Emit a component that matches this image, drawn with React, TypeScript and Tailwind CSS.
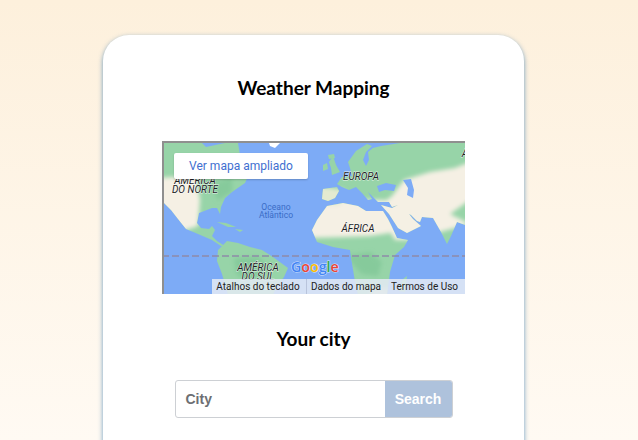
const GOOGLE_LETTERS = [
  { letter: "G", fill: "#4285f4" },
  { letter: "o", fill: "#ea4335" },
  { letter: "o", fill: "#fbbc05" },
  { letter: "g", fill: "#4285f4" },
  { letter: "l", fill: "#34a853" },
  { letter: "e", fill: "#ea4335" },
];

const WATER = "#7dabf6";
const GREEN = "#97d4a8";
const DEEP = "#86ca9b";
const SAND = "#f5f0e4";

const LAND = [
  // North America
  "M162 143H202L206 147L225 143L238 143L240 155L250 172L245 183L232 192L225 198L221 207L220 214L217 208L212 208L199 213L197 223L201 228L209 229L212 226L215 230L212 236L217 241L228 248L221 246L212 240L198 234L186 229L178 219L171 210L164 203L162 198Z",
  // Caribbean
  "M217 222L226 223L236 227L228 227Z",
  "M235 229L243 230L240 232Z",
  // South America
  "M218 250L227 241L238 243L250 247L262 250L273 257L288 268L284 277L276 288L273 295H228L222 274L217 261Z",
  // Iceland, Ireland, UK
  "M328 155L334 154L335 158L329 159Z",
  "M323 165L327 163L328 169L323 171Z",
  "M329 162L333 156L336 165L340 172L332 175L331 168Z",
  // Iberia
  "M323 189L337 187L339 191L335 198L328 201L322 199Z",
  // Eurasia
  "M337 184L342 177L352 176L350 168L348 162L356 151L367 144L372 146L366 152L363 160L366 166L369 160L368 152L373 148L381 146L400 143H465V225L457 222L451 236L447 244L441 232L433 218L422 217L420 222L417 221L411 215L407 213L409 214L398 205L392 207L389 202L378 202L374 198L368 192L372 199L368 200L362 193L356 187L349 190L342 187Z",
  // Africa
  "M312 230L317 220L327 206L343 203L358 206L366 211L383 211L388 219L392 227L397 238L408 240L404 247L395 255L390 272L387 295H358L355 282L352 263L350 250L333 247L317 242Z",
  "M405 292L407 276L402 280L399 291Z",
  // Arabia
  "M381 205L392 208L398 205L409 214L413 219L421 226L407 233L398 228L389 214Z",
];

// viewBox follows the page's pixel coordinates, the map sits at (162, 141)
function WorldMap() {
  return (
    <svg viewBox="162 141 303 153" className="block h-[153px] w-[303px]">
      <defs>
        <filter id="soft" x="-5%" y="-5%" width="110%" height="110%">
          <feGaussianBlur stdDeviation="0.4" />
        </filter>
        <filter id="softer" x="-20%" y="-20%" width="140%" height="140%">
          <feGaussianBlur stdDeviation="2" />
        </filter>
        <clipPath id="land">
          {LAND.map((d, i) => (
            <path key={i} d={d} />
          ))}
        </clipPath>
      </defs>
      <rect x="162" y="141" width="303" height="154" fill={WATER} />

      <g filter="url(#soft)">
        {LAND.map((d, i) => (
          <path key={i} d={d} fill={GREEN} />
        ))}
        <path d="M269 143H280L275 148L270 146Z" fill="#ffffff" />

        {/* Sand and forest tints, kept inside the coasts */}
        <g clipPath="url(#land)">
          <g filter="url(#softer)">
            <path d="M155 178L196 176L200 200L198 226L180 232L155 210Z" fill={SAND} />
            <path d="M305 200H385L396 232L370 236L345 237L305 238Z" fill={SAND} />
            <path d="M376 208L392 196L404 180L430 172L455 168L470 162V200L450 214L470 224L440 232L425 240L395 240Z" fill={SAND} />
            <path d="M318 186L345 190L340 205L316 205Z" fill="#e4ead0" />
            <path d="M345 256L370 252L382 262L378 276L362 274Z" fill={DEEP} />
            <path d="M234 258L258 256L270 268L250 282L236 274Z" fill={DEEP} />
            <path d="M210 184L232 178L232 192L218 200Z" fill={DEEP} />
            <path d="M370 288H390V298H370Z" fill="#cfe3c0" />
          </g>
        </g>

        {/* Inland seas */}
        <path d="M377 186L386 183L396 185L394 191L385 190L379 192Z" fill={WATER} />
        <path d="M403 180L411 179L414 190L413 198L407 195L408 188Z" fill={WATER} />
      </g>

      <line x1="162" y1="256" x2="465" y2="256" stroke="#8f8aa8" strokeWidth="1.4" strokeDasharray="7 3" />

      <g fontFamily="Roboto, sans-serif" fontStyle="italic" fontSize="10" fill="#202124" stroke="#ffffff" strokeWidth="0.8" strokeOpacity="0.8" paintOrder="stroke" textAnchor="middle">
        <text x="195" y="184">AMÉRICA</text>
        <text x="195" y="193">DO NORTE</text>
        <text x="361" y="180">EUROPA</text>
        <text x="358" y="232">ÁFRICA</text>
        <text x="258" y="271">AMÉRICA</text>
        <text x="258" y="280">DO SUL</text>
        <text x="465" y="157">Á</text>
      </g>
      <g fontFamily="Roboto, sans-serif" fontSize="8.6" fill="#3a6cc6" textAnchor="middle">
        <text x="276" y="210">Oceano</text>
        <text x="276" y="218">Atlântico</text>
      </g>
      <text x="291" y="272" fontFamily="'Open Sans', sans-serif" fontSize="14.2" fontWeight="600" stroke="#ffffff" strokeWidth="1" strokeOpacity="0.7" paintOrder="stroke">
        {GOOGLE_LETTERS.map((item, i) => (
          <tspan key={i} fill={item.fill}>
            {item.letter}
          </tspan>
        ))}
      </text>
    </svg>
  );
}

export default function App() {
  return (
    <div className="flex h-[440px] justify-center overflow-hidden bg-gradient-to-b from-[#fdf0dc] to-[#fffaf3] pt-[35px] pr-[11px]">
      <div className="flex h-[500px] w-[421px] flex-col items-center rounded-[26px] bg-white shadow-[0_2px_5px_rgba(70,130,180,0.8)]">
        <h1 className="mt-[40px] font-['Lato',sans-serif] text-[19px] leading-[26px] font-bold text-black">
          Weather Mapping
        </h1>

        <div className="relative mt-[40px] h-[154px] w-[303px] overflow-hidden">
          <WorldMap />
          <div className="absolute inset-x-0 top-0 h-[2px] bg-[#8f8f8f]" />
          <div className="absolute top-0 bottom-[1px] left-0 w-[2px] bg-[#8f8f8f]" />
          <div className="absolute top-[12px] left-[12px] flex h-[26px] w-[134px] items-center justify-center rounded-[2px] bg-white font-['Roboto',sans-serif] text-[12px] text-[#3f6fd0] shadow-[0_1px_2px_rgba(0,0,0,0.2)]">
            Ver mapa ampliado
          </div>
          <div className="absolute right-0 bottom-[1px] flex h-[15px] items-center bg-[#e4eaf5]/85 font-['Roboto',sans-serif] text-[10px] leading-none text-[#222222]">
            <span className="flex h-full w-[95px] items-center justify-center border-r border-[#b9c4dc] pr-[2px]">Atalhos do teclado</span>
            <span className="w-[80px] pr-[2px] text-center">Dados do mapa</span>
            <span className="w-[78px] pr-[3px] text-center">Termos de Uso</span>
          </div>
        </div>

        <h2 className="mt-[31px] font-['Lato',sans-serif] text-[19px] leading-[26px] font-bold text-black">
          Your city
        </h2>

        <div className="mt-[28px] flex h-[38px] w-[278px] overflow-hidden rounded-[3px] border border-[#cdd0d4] font-['Liberation_Sans',sans-serif] text-[14px] font-bold">
          <div className="flex flex-1 items-center pl-[10px] text-[#6d6f73]">City</div>
          <div className="flex w-[67px] items-center justify-center bg-[#aec2dc] text-white">Search</div>
        </div>
      </div>
    </div>
  );
}
